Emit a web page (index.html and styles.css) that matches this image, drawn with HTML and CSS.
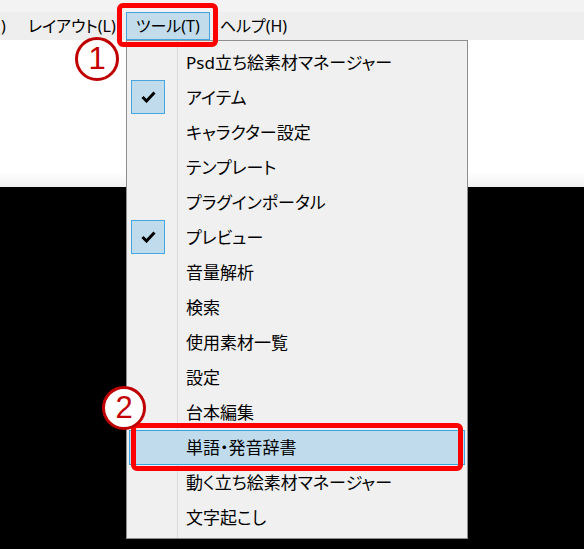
FILE: index.html
```html
<!DOCTYPE html>
<html lang="ja">
<head>
<meta charset="utf-8">
<title>ツールメニュー</title>
<link rel="stylesheet" href="styles.css">
</head>
<body>
<div class="screen">
  <div class="strip"></div>
  <nav class="menubar">
    <span class="mb-item mb-cut">)</span>
    <span class="mb-item">レイアウト(L)</span>
    <span class="mb-item mb-active">ツール(T)</span>
    <span class="mb-item">ヘルプ(H)</span>
  </nav>
  <div class="pane-white"></div>
  <div class="pane-black"></div>

  <ul class="dropdown">
    <li class="dd-item"><span class="gutter"></span><span class="label">Psd立ち絵素材マネージャー</span></li>
    <li class="dd-item"><span class="gutter check"><svg width="15" height="12" viewBox="0 0 15 12"><path d="M1.5 6 L5.5 10 L13.5 1.5" fill="none" stroke="#000" stroke-width="3"/></svg></span><span class="label">アイテム</span></li>
    <li class="dd-item"><span class="gutter"></span><span class="label">キャラクター設定</span></li>
    <li class="dd-item"><span class="gutter"></span><span class="label">テンプレート</span></li>
    <li class="dd-item"><span class="gutter"></span><span class="label">プラグインポータル</span></li>
    <li class="dd-item"><span class="gutter check"><svg width="15" height="12" viewBox="0 0 15 12"><path d="M1.5 6 L5.5 10 L13.5 1.5" fill="none" stroke="#000" stroke-width="3"/></svg></span><span class="label">プレビュー</span></li>
    <li class="dd-item"><span class="gutter"></span><span class="label">音量解析</span></li>
    <li class="dd-item"><span class="gutter"></span><span class="label">検索</span></li>
    <li class="dd-item"><span class="gutter"></span><span class="label">使用素材一覧</span></li>
    <li class="dd-item"><span class="gutter"></span><span class="label">設定</span></li>
    <li class="dd-item"><span class="gutter"></span><span class="label">台本編集</span></li>
    <li class="dd-item dd-hot"><span class="gutter"></span><span class="label">単語・発音辞書</span></li>
    <li class="dd-item"><span class="gutter"></span><span class="label">動く立ち絵素材マネージャー</span></li>
    <li class="dd-item"><span class="gutter"></span><span class="label">文字起こし</span></li>
  </ul>

  <div class="callout-box box-one"></div>
  <div class="callout-box box-two"></div>
  <div class="badge badge-one">1</div>
  <div class="badge badge-two">2</div>
</div>
</body>
</html>
```

FILE: styles.css
```css
* { box-sizing: border-box; }
html, body { margin: 0; padding: 0; }
body {
  width: 584px;
  height: 549px;
  overflow: hidden;
  font-family: "Noto Sans", "Noto Sans CJK JP", sans-serif;
  color: #000;
}
.screen {
  position: relative;
  width: 584px;
  height: 549px;
  display: flex;
  flex-direction: column;
}
.strip { height: 12px; background: #f3f3f3; }
.menubar {
  height: 28px;
  background: #eeeeee;
  display: flex;
  font-size: 16px;
  font-feature-settings: "palt";
}
.mb-item {
  height: 28px;
  line-height: 27px;
  padding: 0 9px;
  border: 1px solid transparent;
  white-space: nowrap;
}
.mb-cut { width: 18px; padding: 0; overflow: hidden; }
.mb-active {
  background: #c2dcec;
  border-color: #45a3de;
}
.pane-white {
  height: 147px;
  background: linear-gradient(to bottom, #ffffff 0, #ffffff 132px, #f2f2f2 147px);
}
.pane-black { flex: 1; background: #000; }

.dropdown {
  position: absolute;
  left: 126px;
  top: 40px;
  width: 342px;
  height: 499px;
  margin: 0;
  list-style: none;
  padding: 4px 2px 3px 2px;
  border: 1px solid #8f8f8f;
  background:
    linear-gradient(to right, transparent 50px, #dadada 50px, #dadada 51px, transparent 51px),
    #f0f0f0;
  font-size: 17px;
  font-feature-settings: "palt";
}
.dd-item {
  height: 35px;
  display: flex;
  align-items: flex-start;
  padding-left: 2px;
  border: 1px solid transparent;
  border-left-width: 0;
  border-right-width: 0;
}
.dd-hot {
  background: #c0dcec;
  border: 1px solid #3ba2e0;
  padding-left: 1px;
}
.gutter {
  width: 34px;
  height: 34px;
  flex: none;
  display: flex;
  align-items: center;
  justify-content: center;
}
.check {
  margin-top: -1px;
  background: #c0dcec;
  border: 1px solid #47a5df;
}
.label {
  margin-left: 21px;
  line-height: 33px;
  white-space: nowrap;
}

.callout-box {
  position: absolute;
  border: 5px solid #ff0000;
  border-radius: 6px;
}
.box-one { left: 117px; top: 3px; width: 101px; height: 44px; }
.box-two { left: 131px; top: 423px; width: 332px; height: 48px; }

.badge {
  position: absolute;
  width: 44px;
  height: 44px;
  border: 3px solid #c00000;
  border-radius: 50%;
  background: #fff;
  color: #c40000;
  font-family: "Liberation Sans", Arial, sans-serif;
  font-size: 31px;
  line-height: 38px;
  text-align: center;
}
.badge-one { left: 75px; top: 37px; }
.badge-two { left: 102px; top: 386px; }
```
